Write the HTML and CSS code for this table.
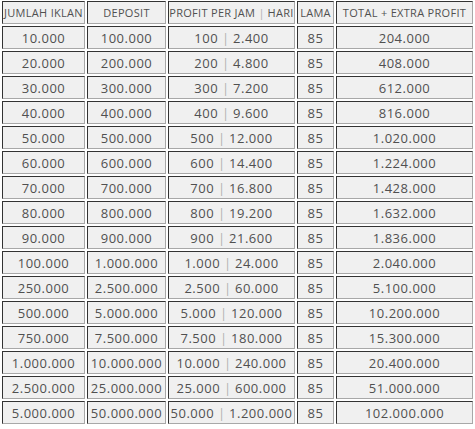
FILE: index.html
```html
<!DOCTYPE html>
<html>
<head>
<meta charset="utf-8">
<link rel="stylesheet" href="styles.css">
</head>
<body>
<table class="grid">
  <colgroup>
    <col class="c1"><col class="c2"><col class="c3"><col class="c4"><col class="c5">
  </colgroup>
  <thead>
    <tr><th>JUMLAH IKLAN</th><th>DEPOSIT</th><th>PROFIT PER JAM <span class="sep">|</span> HARI</th><th>LAMA</th><th>TOTAL + EXTRA PROFIT</th></tr>
  </thead>
  <tbody>
    <tr><td>10.000</td><td>100.000</td><td>100 <span class="sep">|</span> 2.400</td><td>85</td><td>204.000</td></tr>
    <tr><td>20.000</td><td>200.000</td><td>200 <span class="sep">|</span> 4.800</td><td>85</td><td>408.000</td></tr>
    <tr><td>30.000</td><td>300.000</td><td>300 <span class="sep">|</span> 7.200</td><td>85</td><td>612.000</td></tr>
    <tr><td>40.000</td><td>400.000</td><td>400 <span class="sep">|</span> 9.600</td><td>85</td><td>816.000</td></tr>
    <tr><td>50.000</td><td>500.000</td><td>500 <span class="sep">|</span> 12.000</td><td>85</td><td>1.020.000</td></tr>
    <tr><td>60.000</td><td>600.000</td><td>600 <span class="sep">|</span> 14.400</td><td>85</td><td>1.224.000</td></tr>
    <tr><td>70.000</td><td>700.000</td><td>700 <span class="sep">|</span> 16.800</td><td>85</td><td>1.428.000</td></tr>
    <tr><td>80.000</td><td>800.000</td><td>800 <span class="sep">|</span> 19.200</td><td>85</td><td>1.632.000</td></tr>
    <tr><td>90.000</td><td>900.000</td><td>900 <span class="sep">|</span> 21.600</td><td>85</td><td>1.836.000</td></tr>
    <tr><td>100.000</td><td>1.000.000</td><td>1.000 <span class="sep">|</span> 24.000</td><td>85</td><td>2.040.000</td></tr>
    <tr><td>250.000</td><td>2.500.000</td><td>2.500 <span class="sep">|</span> 60.000</td><td>85</td><td>5.100.000</td></tr>
    <tr><td>500.000</td><td>5.000.000</td><td>5.000 <span class="sep">|</span> 120.000</td><td>85</td><td>10.200.000</td></tr>
    <tr><td>750.000</td><td>7.500.000</td><td>7.500 <span class="sep">|</span> 180.000</td><td>85</td><td>15.300.000</td></tr>
    <tr><td>1.000.000</td><td>10.000.000</td><td>10.000 <span class="sep">|</span> 240.000</td><td>85</td><td>20.400.000</td></tr>
    <tr><td>2.500.000</td><td>25.000.000</td><td>25.000 <span class="sep">|</span> 600.000</td><td>85</td><td>51.000.000</td></tr>
    <tr><td>5.000.000</td><td>50.000.000</td><td>50.000 <span class="sep">|</span> 1.200.000</td><td>85</td><td>102.000.000</td></tr>
  </tbody>
</table>
</body>
</html>
```
FILE: styles.css
```css
html, body {
  margin: 0;
  padding: 0;
  background: #ffffff;
}
.grid {
  margin-top: -1px;
  width: 475px;
  table-layout: fixed;
  border-collapse: separate;
  border-spacing: 2px;
  font-family: "Open Sans", sans-serif;
  color: #505050;
}
.c1 { width: 83px; }
.c2 { width: 79px; }
.c3 { width: 127px; }
.c4 { width: 37px; }
.c5 { width: 137px; }
.grid th, .grid td {
  box-sizing: border-box;
  background: #f0f0f0;
  border-top: 1px solid #333333;
  border-left: 1px solid #333333;
  border-right: 1px solid #a8a8a8;
  border-bottom: 1px solid #a8a8a8;
  padding: 0;
  text-align: center;
  white-space: nowrap;
  overflow: hidden;
}
.grid th {
  height: 23px;
  font-size: 11px;
  font-weight: normal;
  letter-spacing: 0.3px;
}
.grid td {
  height: 23px;
  font-size: 13px;
  letter-spacing: 0.5px;
}
.sep {
  color: #b0b0b0;
  letter-spacing: 0;
}
```
